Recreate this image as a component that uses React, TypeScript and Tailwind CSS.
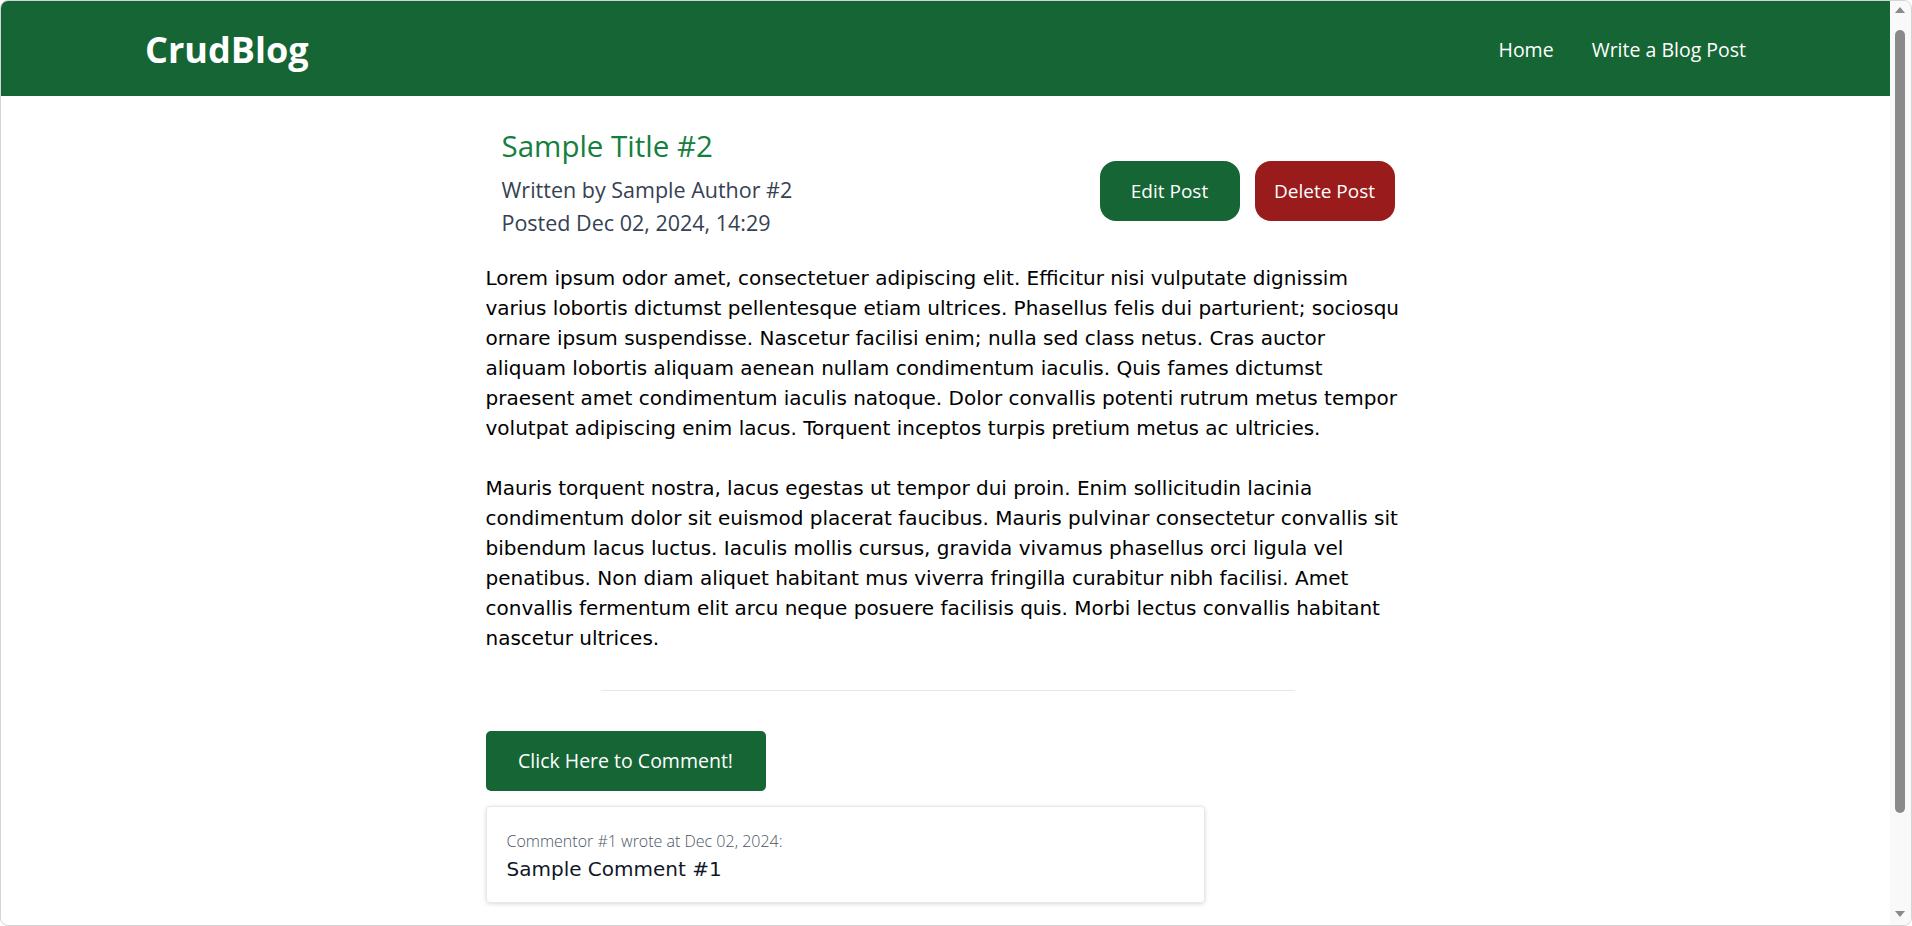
import React from "react";

// ─── Content ──────────────────────────────────────────────────────────────────

const post = {
  title: "Sample Title #2",
  author: "Sample Author #2",
  posted: "Dec 02, 2024, 14:29",
  body: [
    "Lorem ipsum odor amet, consectetuer adipiscing elit. Efficitur nisi vulputate dignissim varius lobortis dictumst pellentesque etiam ultrices. Phasellus felis dui parturient; sociosqu ornare ipsum suspendisse. Nascetur facilisi enim; nulla sed class netus. Cras auctor aliquam lobortis aliquam aenean nullam condimentum iaculis. Quis fames dictumst praesent amet condimentum iaculis natoque. Dolor convallis potenti rutrum metus tempor volutpat adipiscing enim lacus. Torquent inceptos turpis pretium metus ac ultricies.",
    "Mauris torquent nostra, lacus egestas ut tempor dui proin. Enim sollicitudin lacinia condimentum dolor sit euismod placerat faucibus. Mauris pulvinar consectetur convallis sit bibendum lacus luctus. Iaculis mollis cursus, gravida vivamus phasellus orci ligula vel penatibus. Non diam aliquet habitant mus viverra fringilla curabitur nibh facilisi. Amet convallis fermentum elit arcu neque posuere facilisis quis. Morbi lectus convallis habitant nascetur ultrices.",
  ],
};

const comments = [
  { id: 1, author: "Commentor #1", date: "Dec 02, 2024", text: "Sample Comment #1" },
];

// ─── Navbar ───────────────────────────────────────────────────────────────────

function Navbar() {
  return (
    <header className="h-[95px] shrink-0 bg-[#166534] px-36 flex items-center justify-between font-['Open_Sans',sans-serif] text-white">
      <h1 className="text-[36px] font-bold mt-[3px]">CrudBlog</h1>
      <nav className="flex items-center gap-[38px] text-[19.5px] mt-[2px]">
        <a href="#">Home</a>
        <a href="#">Write a Blog Post</a>
      </nav>
    </header>
  );
}

// ─── Scrollbar (window chrome) ────────────────────────────────────────────────

function Scrollbar() {
  return (
    <div className="w-[21px] shrink-0 bg-[#f9f9f9] flex flex-col items-center pt-[6px] pb-[8px] pr-[2px]">
      <svg width="10" height="6" viewBox="0 0 10 6">
        <path d="M5 0 L10 6 L0 6 Z" fill="#8a8a8a" />
      </svg>
      <div className="mt-[17px] w-[10px] h-[783px] rounded-full bg-[#8a8a8a]" />
      <div className="flex-1" />
      <svg width="10" height="6" viewBox="0 0 10 6">
        <path d="M0 0 L10 0 L5 6 Z" fill="#8a8a8a" />
      </svg>
    </div>
  );
}

// ─── CommentCard ──────────────────────────────────────────────────────────────

function CommentCard({ c }: { c: (typeof comments)[number] }) {
  return (
    <div className="w-[719px] border border-gray-200 rounded shadow-[0_1px_4px_rgba(0,0,0,0.15)] px-5 pt-[21px] pb-[19px]">
      <p className="font-['Open_Sans',sans-serif] font-light text-[16px] leading-[26px] text-gray-600">
        {c.author} wrote at {c.date}:
      </p>
      <p className="mt-[1px] font-['DejaVu_Sans',sans-serif] text-[20px] leading-[28px] text-gray-900">
        {c.text}
      </p>
    </div>
  );
}

// ─── App ──────────────────────────────────────────────────────────────────────

export default function App() {
  return (
    <div className="h-[926px] flex bg-white border border-[#d4d4d4] rounded-[8px] overflow-hidden">
      <div className="flex-1 min-w-0 flex flex-col">
        <Navbar />

        <main className="w-[925px] ml-[calc(50%-460px)] pt-[30px] pb-9">
          {/* Post header */}
          <div className="flex items-start justify-between px-4 font-['Open_Sans',sans-serif]">
            <div>
              <h2 className="text-[29.5px] leading-[40px] text-[#15803d]">{post.title}</h2>
              <p className="mt-[7px] text-[21.5px] leading-[33px] text-gray-700">Written by {post.author}</p>
              <p className="text-[21.5px] leading-[33px] text-gray-700">Posted {post.posted}</p>
            </div>
            <div className="flex gap-[15px] mt-[35px] text-[19px] text-white">
              <button className="w-[140px] h-[60px] rounded-2xl bg-[#166534]">Edit Post</button>
              <button className="w-[140px] h-[60px] rounded-2xl bg-[#991b1b]">Delete Post</button>
            </div>
          </div>

          {/* Body */}
          <div className="mt-[24px] font-['DejaVu_Sans',sans-serif] text-[20px] leading-[30px] text-black">
            {post.body.map((para, i) => (
              <p key={i} className={i > 0 ? "mt-[30px]" : ""}>
                {para}
              </p>
            ))}
          </div>

          <hr className="w-3/4 mx-auto mt-[37px] border-gray-200" />

          {/* Comments */}
          <button className="mt-[40px] w-[280px] h-[60px] rounded-[5px] bg-[#166534] text-white text-[19.5px] font-['Open_Sans',sans-serif]">
            Click Here to Comment!
          </button>

          <div className="mt-[15px] flex flex-col gap-4">
            {comments.map((c) => (
              <CommentCard key={c.id} c={c} />
            ))}
          </div>
        </main>
      </div>
      <Scrollbar />
    </div>
  );
}
